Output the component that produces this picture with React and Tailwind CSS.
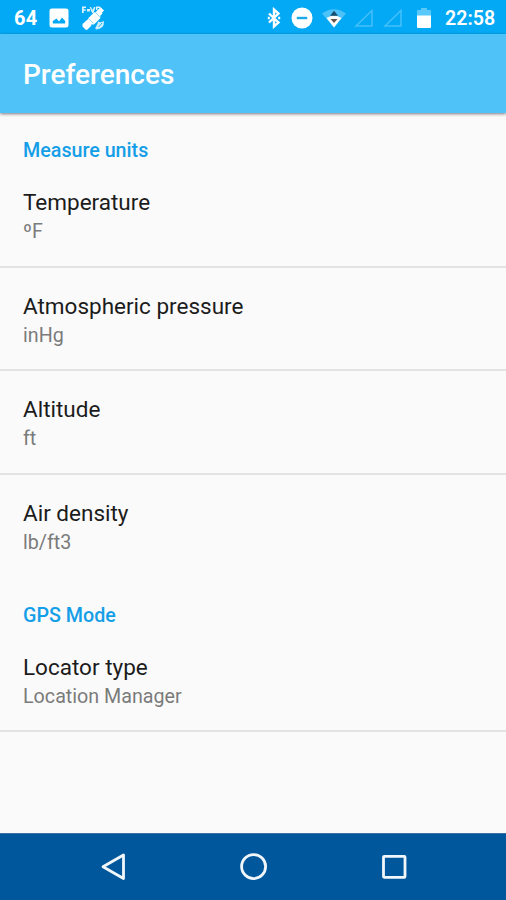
const sections = [
  {
    title: "Measure units",
    items: [
      { name: "Temperature", value: "ºF", line: true },
      { name: "Atmospheric pressure", value: "inHg", line: true },
      { name: "Altitude", value: "ft", line: true },
      { name: "Air density", value: "lb/ft3", line: false },
    ],
  },
  {
    title: "GPS Mode",
    items: [{ name: "Locator type", value: "Location Manager", line: true }],
  },
];

const SignalIcon = ({ className }) => (
  <svg viewBox="0 0 20 20" className={`h-5 w-5 ${className}`} fill="none">
    <path d="M18 2.500v15.500H2z" stroke="#45bffa" strokeWidth="1.500" />
  </svg>
);

const StatusBar = () => (
  <header className="flex h-[34px] shrink-0 items-center bg-[#03a9f4] pt-px pr-[11px] pl-3.5 text-white">
    <span className="w-[35px] pt-px text-[20px] leading-none font-bold tracking-[0.4px]">64</span>
    <svg viewBox="0 0 20 20" className="h-5 w-5">
      <path
        fillRule="evenodd"
        fill="currentColor"
        d="M3 .5h14q2.500 0 2.500 2v14.500q0 2.500-2.500 2.500H3Q.5 19.500.5 17V2.500q0-2 2.500-2zm.8 15h12.400v-2.500l-3.200-3.500-3 4-2.500-3L3.800 13z"
      />
    </svg>
    {/* GPS satellite */}
    <svg viewBox="0 0 24 26" className="ml-3 h-[26px] w-6" fill="currentColor">
      <path d="M15 7.500l4.500-5.500 3.500 3.500-5 5.500zM1.500 19l4-3.500 5 5-4 4q-1 .8-2 0l-3-3z" />
      <path d="M7.500 13l5.500-5.500q1.500-1 3 0l3 3q1 1.500 0 3L13.500 19q-1.500 1-3 0l-3-3q-1-1.500 0-3z" />
      <path d="M4.500 16.500l13-12 4 4-12 12z" />
      <path d="M1 1.500h4V3H2.700v1.200h2v1.500h-2V8H1zM6 4h3v2.500H6zM10 2l1.500 3L13 2h1.500l-2 6H11L8.700 2zM15 1.500h4V3h-2.500v2H15z" opacity="0.85" />
      <path d="M17 16.500q3 1.500 6-.5.5 8-8 8.500-1.500-1 0-3 2-2.500 2-5z" opacity="0.8" />
      <path d="M17.500 22l3.500-4" stroke="#03a9f4" strokeWidth="0.8" />
      <path d="M14 7l5.500 5.500M7.500 13.500l5 5" stroke="#03a9f4" strokeWidth="0.7" opacity="0.6" />
    </svg>
    <div className="ml-auto flex items-center">
      <svg viewBox="0 0 14 22" className="h-[22px] w-3.5" fill="none">
        <path d="M2 6.500l9.500 9L7 19.500V2.500l4.500 4-9.500 9" stroke="currentColor" strokeWidth="2.400" />
        <path d="M.8 11h2M11.200 11h2" stroke="currentColor" strokeWidth="2.400" />
      </svg>
      <svg viewBox="0 0 22 22" className="ml-2.5 h-[22px] w-[22px]">
        <circle cx="11" cy="11" r="10.500" fill="currentColor" />
        <path d="M5.800 11h10.400" stroke="#1ba8ee" strokeWidth="2.400" />
      </svg>
      <svg viewBox="0 0 26 20" className="ml-2 h-5 w-[26px]">
        <path d="M1 5.500Q13-3 25 5.500L13 19.500z" fill="#4cc2f8" />
        <path d="M5.500 10Q13 5.500 20.500 10L13 19.500z" fill="#fff" />
        <path d="M9 7.800L13 2.800l4 5z" fill="#1c4f6b" />
        <path d="M9.500 11L13 15l3.500-4z" fill="#66534d" />
      </svg>
      <SignalIcon className="ml-[7px]" />
      <SignalIcon className="ml-[9px]" />
      <svg viewBox="0 0 14 22" className="ml-3.5 h-[22px] w-3.5">
        <path d="M4 1h6v2h3q1 0 1 1v5H0V4q0-1 1-1h3z" fill="#5bc8fb" />
        <path d="M0 8.500h14V20q0 1-1 1H1q-1 0-1-1z" fill="currentColor" />
      </svg>
      <span className="ml-3.5 w-[50px] pt-0.5 text-[19.6px] leading-none font-semibold whitespace-nowrap">22:58</span>
    </div>
  </header>
);

const PreferenceRow = ({ item }) => (
  <li className={`h-[103.7px] border-b-2 pt-[23px] pl-[23px] ${item.line ? "border-[#e3e3e3]" : "border-transparent"}`}>
    <p className="text-[22.5px] leading-[30px] text-[#1c1c1c]">{item.name}</p>
    <p className="pt-px text-[19.7px] leading-[27px] text-[#7b7b7b]">{item.value}</p>
  </li>
);

const NavBar = () => (
  <nav className="flex h-[67px] shrink-0 items-center justify-between border-t border-[#3d6fa8] bg-[#01579b] pr-[98px] pl-[99px] text-[#f1f6fb]">
    <svg viewBox="0 0 28 28" className="h-7 w-7" fill="none">
      <path d="M24.500 2v23.500L4 13.800z" stroke="currentColor" strokeWidth="2.800" strokeLinejoin="round" />
    </svg>
    <svg viewBox="0 0 28 28" className="h-7 w-7" fill="none">
      <circle cx="13.600" cy="13.600" r="12" stroke="currentColor" strokeWidth="2.800" />
    </svg>
    <svg viewBox="0 0 28 28" className="h-7 w-7" fill="none">
      <rect x="3.500" y="3.300" width="21.500" height="21" rx="0.800" stroke="currentColor" strokeWidth="2.800" />
    </svg>
  </nav>
);

export default function App() {
  return (
    <div className="flex h-screen w-full flex-col overflow-hidden bg-[#fafafa] font-['Roboto',sans-serif]">
      <StatusBar />
      <div className="z-10 flex h-[79px] shrink-0 items-center bg-[#4fc3f7] pl-[23px] shadow-[0_1px_3px_rgba(0,0,0,0.5)]">
        <h1 className="pt-0.5 text-[28px] leading-none font-medium text-white">Preferences</h1>
      </div>
      <main className="flex-1 pt-px">
        {sections.map((section) => (
          <section key={section.title}>
            <h2 className="h-[50px] pt-6 pl-[23px] text-[19.7px] leading-[26px] font-medium text-[#159ee8]">
              {section.title}
            </h2>
            <ul>
              {section.items.map((item) => (
                <PreferenceRow key={item.name} item={item} />
              ))}
            </ul>
          </section>
        ))}
      </main>
      <NavBar />
    </div>
  );
}
